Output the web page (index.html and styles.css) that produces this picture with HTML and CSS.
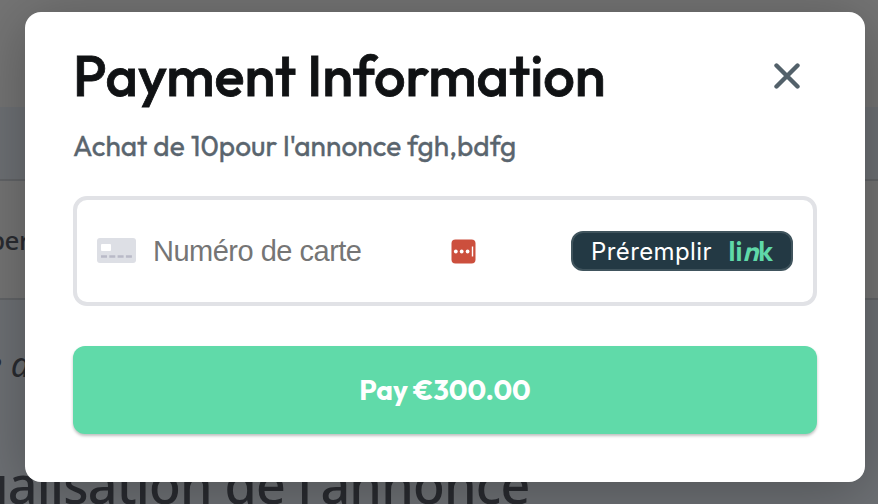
FILE: index.html
```html
<!DOCTYPE html>
<html lang="fr">
<head>
  <meta charset="UTF-8">
  <title>Payment Information</title>
  <link rel="stylesheet" href="styles.css">
</head>
<body>
  <!-- Page behind the modal -->
  <main class="page">
    <div class="page-top"></div>
    <div class="page-banner"></div>
    <div class="page-row"><span>per</span></div>
    <div class="page-details">
      <p class="page-note">e a</p>
      <h2 class="page-title">ualisation de l'annonce</h2>
    </div>
  </main>

  <!-- Payment Modal -->
  <div class="overlay">
    <div class="modal">
      <header class="modal-header">
        <h1>Payment Information</h1>
        <button class="close-button" aria-label="Fermer">
          <svg width="26" height="26" viewBox="0 0 26 26">
            <path d="M2.5 2.5l21 21M23.5 2.5l-21 21"/>
          </svg>
        </button>
      </header>
      <p class="description">Achat de 10pour l'annonce fgh,bdfg</p>
      <div class="card-field">
        <svg class="card-icon" width="39" height="25" viewBox="0 0 39 25">
          <rect width="39" height="25" rx="3" fill="#dddfe5"/>
          <rect x="4" y="6" width="10" height="7" rx="1" fill="#fff"/>
          <path d="M4 18.5h31" stroke="#b9bac7" stroke-width="2.4" stroke-dasharray="6 2.3"/>
        </svg>
        <span class="card-label">Numéro de carte</span>
        <svg class="password-icon" width="25" height="25" viewBox="0 0 25 25">
          <rect x="0.5" y="0.5" width="24" height="24" rx="4" fill="#cc4f3d"/>
          <circle cx="4.8" cy="12.5" r="1.9" fill="#fff"/>
          <circle cx="10.7" cy="12.5" r="1.9" fill="#fff"/>
          <circle cx="16.6" cy="12.5" r="1.9" fill="#fff"/>
          <path d="M21.5 7.5v10" stroke="#fff" stroke-width="1.4"/>
        </svg>
        <button class="link-button">
          <span class="link-text">Préremplir</span>
          <span class="link-logo">li<i>n</i>k</span>
        </button>
      </div>
      <button class="pay-button">Pay €300.00</button>
    </div>
  </div>
</body>
</html>
```
FILE: styles.css
```css
* {
  box-sizing: border-box;
}
body {
  margin: 0;
  height: 504px;
  overflow: hidden;
  font-family: Outfit, Lato, sans-serif;
}
h1,
h2,
p {
  margin: 0;
}
button {
  border: none;
  padding: 0;
  font-family: inherit;
}
/* Page behind the modal */
.page {
  height: 504px;
  overflow: hidden;
  background-color: #747474;
  font-family: "Noto Sans", sans-serif;
  color: #292b30;
  white-space: nowrap;
}
.page-top {
  height: 107px;
}
.page-banner {
  height: 74px;
  background-color: #6d7074;
  border-bottom: 2px solid #626467;
}
.page-row {
  height: 119px;
  padding-top: 41px;
  border-bottom: 2px solid #626467;
  font-size: 26px;
  line-height: 36px;
  font-weight: 500;
  letter-spacing: -0.5px;
}
.page-row span {
  margin-left: -11px;
}
.page-details {
  height: 204px;
  padding-top: 42px;
  background-color: #6d7074;
}
.page-note {
  margin-left: -15px;
  font-size: 34px;
  line-height: 44px;
  font-style: italic;
}
.page-title {
  margin: 63px 0 0 -24px;
  font-size: 52px;
  line-height: 70px;
  font-weight: 500;
  letter-spacing: -0.8px;
}
/* Payment Modal */
.overlay {
  position: absolute;
  top: 0;
  left: 0;
  width: 878px;
  height: 504px;
  padding: 12px 13px 22px 25px;
  overflow: hidden;
}
.modal {
  height: 470px;
  padding: 32px 48px 48px;
  background-color: #fff;
  border-radius: 16px;
  box-shadow: 0 8px 60px rgba(0, 0, 0, 0.28);
}
.modal-header {
  display: flex;
  justify-content: space-between;
  align-items: center;
  height: 64px;
  padding-right: 17px;
}
.modal-header h1 {
  font-size: 56px;
  line-height: 64px;
  font-weight: 500;
  color: #101214;
  -webkit-text-stroke: 0.8px #101214;
  white-space: nowrap;
}
.close-button {
  width: 26px;
  height: 26px;
  background: none;
  cursor: pointer;
}
.close-button svg {
  display: block;
  fill: none;
  stroke: #53616a;
  stroke-width: 4.4;
  stroke-linecap: round;
}
.description {
  margin-top: 18px;
  font-size: 28px;
  line-height: 40px;
  font-weight: 400;
  letter-spacing: 0.05px;
  color: #5a656e;
  -webkit-text-stroke: 0.35px #5a656e;
  white-space: nowrap;
}
.card-field {
  display: flex;
  align-items: center;
  height: 110px;
  margin-top: 30px;
  padding: 0 20px;
  border: 4px solid #e1e2e6;
  border-radius: 14px;
}
.card-icon {
  margin-top: -2px;
}
.card-label {
  width: 298px;
  margin-left: 17px;
  font-family: "Liberation Sans", Arial, sans-serif;
  font-size: 29px;
  letter-spacing: -0.5px;
  color: #757575;
}
.link-button {
  display: flex;
  align-items: center;
  justify-content: space-between;
  width: 222px;
  height: 40px;
  margin-left: auto;
  padding: 0 18px;
  background-color: #233944;
  border: 2px solid #40545d;
  border-radius: 12px;
  cursor: pointer;
}
.link-text {
  font-family: Inter, sans-serif;
  font-size: 24px;
  letter-spacing: 0.4px;
  color: #fff;
}
.link-logo {
  font-size: 28px;
  line-height: 32px;
  font-weight: 600;
  color: #60d9a9;
}
.pay-button {
  display: block;
  width: 744px;
  height: 88px;
  margin-top: 40px;
  padding-bottom: 2px;
  background-color: #60daa9;
  border-radius: 12px;
  box-shadow: 0 2px 3px rgba(0, 0, 0, 0.25);
  font-size: 28px;
  font-weight: 700;
  color: #fff;
  cursor: pointer;
}
```
